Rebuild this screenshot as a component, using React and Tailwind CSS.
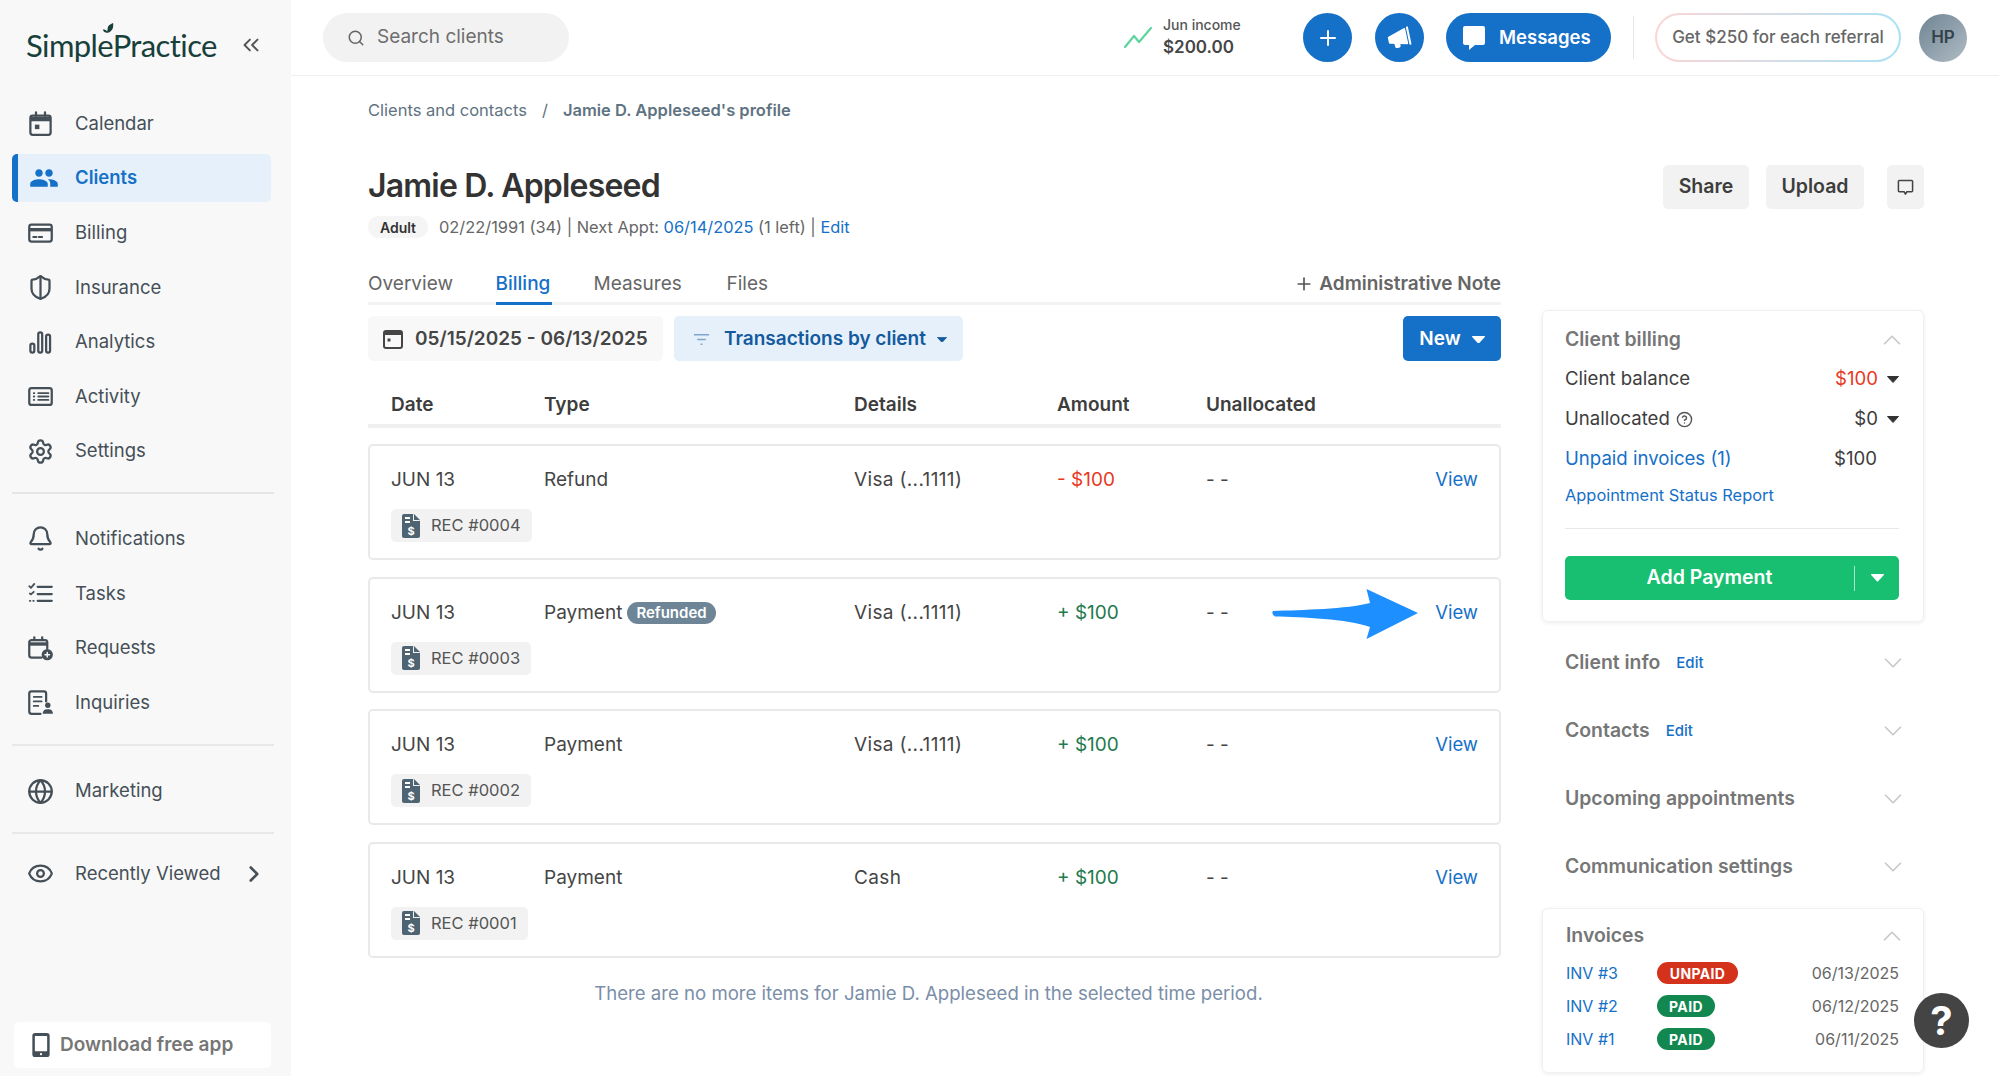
import React from 'react';
import { ChevronsLeft, ChevronRight, ChevronUp, ChevronDown, ShieldHalf, Settings, Bell, Globe, Eye, Search, Plus, CircleHelp } from 'lucide-react';
import { MdPeople } from 'react-icons/md';

const Ico = ({ children }) => (
  <svg viewBox="0 0 24 24" width="27" height="27" fill="none" stroke="#454f57" strokeWidth="2" strokeLinecap="round" strokeLinejoin="round">{children}</svg>
);
const CalendarI = () => <Ico><rect x="3" y="5" width="18" height="17" rx="2" /><path d="M3 8h18" strokeWidth="4" strokeLinecap="butt" /><path d="M8 2v3M16 2v3" /><rect x="7" y="13" width="4" height="4" fill="#454f57" stroke="none" /></Ico>;
const CardI = () => <Ico><rect x="2" y="5" width="20" height="15" rx="2" /><path d="M2 9.5h20" strokeWidth="3" strokeLinecap="butt" /><path d="M5.5 16h3M10.5 16h3" strokeWidth="1.6" /></Ico>;
const BarsI = () => <Ico><rect x="3" y="13" width="3.5" height="8" rx="1.7" /><rect x="10" y="3" width="3.5" height="18" rx="1.7" /><rect x="17" y="5" width="3.5" height="16" rx="1.7" /></Ico>;
const ListI = () => <Ico><rect x="2" y="4.5" width="20" height="15" rx="2" /><path d="M10 9h9M10 12h9M10 15h9M6 9h.5M6 12h.5M6 15h.5" strokeWidth="1.6" /></Ico>;
const TasksI = () => <Ico><path d="M2 5.5l1.5 1.5L6.5 3.5M2.5 12l1 .8L6 10.5M2.5 18.5h.5M5.5 18.5h.5" strokeWidth="1.6" /><path d="M9.5 6h12.5M9.5 12.5h12.5M9.5 18.5h12.5" /></Ico>;
const RequestI = () => <Ico><path d="M13 20H4a2 2 0 0 1-2-2V6.5a2 2 0 0 1 2-2h12a2 2 0 0 1 2 2V12" /><path d="M2 8h16" strokeWidth="3" strokeLinecap="butt" /><path d="M6.5 2v2.5M13.5 2v2.5" /><circle cx="18" cy="17.5" r="5" fill="#454f57" stroke="none" /><path d="M18 15.5v4M16 17.5h4" stroke="#f8f8f8" strokeWidth="1.3" /></Ico>;
const InquiryI = () => <Ico><path d="M12 22H4a2 2 0 0 1-2-2V4a2 2 0 0 1 2-2h11a2 2 0 0 1 2 2v7" /><path d="M6 7h7M6 11h7M6 15h4" strokeWidth="1.6" /><circle cx="18.5" cy="14.5" r="2.4" fill="#454f57" stroke="none" /><path d="M14 22v-1a4 4 0 0 1 4-3h1a4 4 0 0 1 4 3v1z" fill="#454f57" stroke="none" /></Ico>;
const PhoneI = () => <svg viewBox="0 0 18 26" width="18" height="25"><rect x="0" y="0" width="18" height="25" rx="3" fill="#454f57" /><rect x="2.6" y="3" width="12.8" height="16" rx="0.5" fill="#fff" /><circle cx="9" cy="22" r="1.2" fill="#fff" /></svg>;
const ReceiptI = () => (
  <svg viewBox="0 0 18 24" width="18" height="24">
    <path d="M2 0h9l7 7v15a2 2 0 0 1-2 2H2a2 2 0 0 1-2-2V2a2 2 0 0 1 2-2z" fill="#4e6472" />
    <path d="M11 0l7 7h-7z" fill="#f2f2f2" />
    <path d="M12 0l6 6h-6z" fill="#4e6472" />
    <rect x="3" y="3" width="5" height="2" fill="#fff" /><rect x="3" y="7" width="5" height="2" fill="#fff" />
    <text x="9" y="20.5" textAnchor="middle" fontSize="11" fontWeight="700" fill="#fff" fontFamily="Inter, sans-serif">$</text>
  </svg>
);
const Tri = ({ c = '#333', w = 12 }) => <svg viewBox="0 0 12 7" width={w} height={w * 7 / 12}><path d="M0.5 0.5h11L6 6.5z" fill={c} stroke={c} strokeLinejoin="round" /></svg>;

const navA = [
  ['Calendar', <CalendarI />], ['Clients', <MdPeople size={30} color="#1570c8" />], ['Billing', <CardI />], ['Insurance', <ShieldHalf size={27} color="#454f57" strokeWidth={2} />],
  ['Analytics', <BarsI />], ['Activity', <ListI />], ['Settings', <Settings size={27} color="#454f57" strokeWidth={2} />],
];
const navB = [['Notifications', <Bell size={27} color="#454f57" strokeWidth={2} />], ['Tasks', <TasksI />], ['Requests', <RequestI />], ['Inquiries', <InquiryI />]];

const NavItem = ({ label, icon }) => {
  const active = label === 'Clients';
  return (
    <div className={active ? 'h-[48px] my-[3.3px] mr-[3px] flex items-center rounded-[5px] bg-[#e6f0fa] border-l-[6px] border-[#1570c8]' : 'h-[54.6px] flex items-center'}>
      <span className={active ? 'w-[51px] mr-[6px] flex justify-center' : 'w-[57px] mr-[6px] flex justify-center'}>{icon}</span>
      <span className={active ? 'text-[18.5px] font-semibold text-[#1570c8]' : 'text-[18.5px] text-[#454f57]'}>{label}</span>
    </div>
  );
};

const rows = [
  ['Refund', 'Visa (...1111)', '- $100', '#e8391f', 'REC #0004', false],
  ['Payment', 'Visa (...1111)', '+ $100', '#1f7a4d', 'REC #0003', true],
  ['Payment', 'Visa (...1111)', '+ $100', '#1f7a4d', 'REC #0002', false],
  ['Payment', 'Cash', '+ $100', '#1f7a4d', 'REC #0001', false],
];

const TxCard = ({ r, arrow }) => (
  <div className="relative h-[116px] rounded-[5px] border-2 border-[#e9e9e9] pl-[21px] pr-[21px] pt-[20px]">
    <div className="flex items-center h-[29px] text-[19px] text-[#454545]">
      <span className="w-[153px]">JUN 13</span>
      <span className="w-[310px] flex items-center gap-[5px]">{r[0]}{r[5] && <span className="h-[22px] px-[9px] flex items-center rounded-full bg-[#6d8596] text-white text-[15px] font-semibold">Refunded</span>}</span>
      <span className="w-[203px] tracking-[0.35px]">{r[1]}</span>
      <span className="w-[149px]" style={{ color: r[3] }}>{r[2]}</span>
      <span className="flex-1">- -</span>
      <span className="text-[#1570c8] text-[18.5px] -mt-[1px]">View</span>
    </div>
    <div className="mt-[14px] inline-flex items-center h-[33px] rounded-[5px] bg-[#f2f2f2] pl-[11px] pr-[11px] gap-[11px] text-[16.5px] text-[#555]">
      <ReceiptI />{r[4]}
    </div>
    {arrow && (
      <svg className="absolute left-[902px] top-[9px]" viewBox="0 0 147 52" width="147" height="52">
        <path d="M1 23 C30 22 75 21 98 15 L94.5 1 L146 25 L94.5 51 L98 39 C75 31 30 29 3 28.5 Q-1 26 1 23z" fill="#1e8fff" />
      </svg>
    )}
  </div>
);

const Acc = ({ title, edit }) => (
  <div className="h-[68px] pl-[23px] pr-[24px] flex items-center">
    <span className="text-[19.4px] font-semibold text-[#767676]">{title}</span>
    {edit && <span className="ml-[16px] text-[15px] font-medium text-[#1570c8]">Edit</span>}
    <ChevronDown size={30} strokeWidth={1.4} color="#c9c9c9" className="ml-auto -mr-[8px]" />
  </div>
);

const Inv = ({ n, s, d }) => (
  <div className="h-[33px] flex items-center">
    <span className="w-[91px] text-[16px] text-[#1570c8]">{n}</span>
    <span className={s === 'UNPAID' ? 'h-[22px] w-[81px] rounded-full bg-[#d4321b] text-white text-[14px] font-bold flex items-center justify-center tracking-wide' : 'h-[22px] w-[58px] rounded-full bg-[#12874f] text-white text-[14px] font-bold flex items-center justify-center tracking-wide'}>{s}</span>
    <span className="ml-auto text-[16px] text-[#666]">{d}</span>
  </div>
);

export default function App() {
  return (
    <div className="w-[1999px] h-[1076px] overflow-hidden flex bg-white relative" style={{ fontFamily: 'Inter, "Liberation Sans", sans-serif' }}>
      <aside className="w-[291px] shrink-0 h-full bg-[#f8f8f8] flex flex-col pl-[12px] pr-[17px] relative">
        <div className="h-[96.4px] flex items-center justify-between pl-[14px] pr-[10px] pb-[6px]">
          <span className="relative text-[31px] leading-none text-[#17403a] tracking-[-0.6px]" style={{ fontFamily: 'Lato, sans-serif' }}>
            SimplePractice
            <svg className="absolute left-[76px] top-[-7px]" viewBox="0 0 14 14" width="12" height="12"><path d="M1 8c1.5-1 4 0 5 2 1-3 0-5 2-7 1.500-1.400 3-2 5-3 .5 5-.5 9-5 11-3 1-6 0-7-3z" fill="#17403a" /></svg>
          </span>
          <ChevronsLeft size={26} color="#555" strokeWidth={1.8} />
        </div>
        {navA.map(([l, i]) => <NavItem key={l} label={l} icon={i} />)}
        <div className="h-[2px] bg-[#e5e5e5] mt-[13px] mb-[18px]" />
        {navB.map(([l, i]) => <NavItem key={l} label={l} icon={i} />)}
        <div className="h-[2px] bg-[#e8e8e8] mt-[14px] mb-[18px]" />
        <NavItem label="Marketing" icon={<Globe size={27} color="#454f57" strokeWidth={2} />} />
        <div className="h-[2px] bg-[#e8e8e8] mt-[13px] mb-[13px]" />
        <div className="h-[54.6px] flex items-center">
          <span className="w-[57px] mr-[6px] flex justify-center"><Eye size={27} color="#454f57" strokeWidth={2} /></span>
          <span className="text-[18.5px] text-[#454f57]">Recently Viewed</span>
          <ChevronRight size={26} color="#454f57" strokeWidth={2.4} className="ml-auto mr-[7px]" />
        </div>
        <div className="mt-auto mb-[8px] ml-[2px] mr-[3px] h-[46px] bg-white rounded-[5px] flex items-center pl-[18px] gap-[10px] text-[19px] font-semibold text-[#767676]">
          <PhoneI />Download free app
        </div>
      </aside>

      <main className="flex-1 min-w-0 flex flex-col">
        <header className="h-[76px] shrink-0 border-b border-[#efefef] flex items-center pl-[32px] pr-[32px]">
          <div className="w-[246px] h-[49px] rounded-full bg-[#f2f2f2] flex items-center pl-[24px] gap-[12px] text-[19px] text-[#6e6e6e]">
            <Search size={18} color="#666" />Search clients
          </div>
          <svg className="ml-[555px]" viewBox="0 0 28 24" width="28" height="24" fill="none" stroke="#5fd3a0" strokeWidth="2.2" strokeLinejoin="round" strokeLinecap="round"><path d="M1 21 L10 10 L15 16 L27 2" /></svg>
          <div className="ml-[11px] w-[140px] flex flex-col -mt-[2px]">
            <span className="text-[14px] leading-[20px] font-medium text-[#555]">Jun income</span>
            <span className="text-[17px] leading-[24px] font-semibold text-[#454545]">$200.00</span>
          </div>
          <div className="w-[49px] h-[49px] rounded-full bg-[#1570c8] flex items-center justify-center"><Plus size={24} color="#fff" strokeWidth={2} /></div>
          <div className="ml-[23px] w-[49px] h-[49px] rounded-full bg-[#1570c8] flex items-center justify-center">
            <svg viewBox="0 0 24 24" width="25" height="25" style={{ transform: 'rotate(-12deg)' }}>
              <path d="M2 10 L18 5 V19 L2 15z" fill="#fff" stroke="#fff" strokeWidth="2" strokeLinejoin="round" />
              <rect x="20" y="3" width="2" height="18" rx="1" fill="#fff" />
              <path d="M6 16v3.500a2 2 0 0 0 2 2h1.500a2 2 0 0 0 2-2V18z" fill="#fff" />
            </svg>
          </div>
          <div className="ml-[22px] w-[165px] h-[49px] rounded-full bg-[#1570c8] flex items-center pl-[16px] gap-[13px] text-[18.5px] font-semibold text-white">
            <svg viewBox="0 0 24 26" width="24" height="26"><path d="M3 1h18a2 2 0 0 1 2 2v15a2 2 0 0 1-2 2h-8l-6 5v-5H3a2 2 0 0 1-2-2V3a2 2 0 0 1 2-2z" fill="#fff" /></svg>
            Messages
          </div>
          <div className="ml-[22px] w-px h-[43px] bg-[#e8e8e8]" />
          <div className="ml-[21px] w-[246px] h-[49px] rounded-full p-[2px] bg-gradient-to-r from-[#fbd5d5] to-[#a8e2f5]">
            <div className="w-full h-full rounded-full bg-white flex items-center justify-center text-[17px] font-medium text-[#666]">Get $250 for each referral</div>
          </div>
          <div className="ml-[18px] w-[48px] h-[48px] rounded-full bg-gradient-to-br from-[#6f8493] to-[#b0bcc4] flex items-center justify-center text-[17px] font-semibold text-[#33414b]">HP</div>
        </header>

        <div className="flex-1 min-h-0 pl-[77px] pr-[75px] flex flex-col">
          <div className="mt-[24px] h-[20px] flex items-center text-[16.5px] text-[#5f7381] gap-[15px]">
            <span>Clients and contacts</span><span>/</span><span className="font-semibold">Jamie D. Appleseed's profile</span>
          </div>
          <div className="mt-[44px] flex items-start justify-between h-[88px]">
            <div>
              <h1 className="h-[44px] flex items-center text-[32px] font-semibold tracking-[-0.8px] text-[#333]">Jamie D. Appleseed</h1>
              <div className="mt-[7px] flex items-center text-[16.4px] text-[#666]">
                <span className="h-[22px] w-[60px] rounded-full bg-[#f5f5f5] flex items-center justify-center text-[14px] font-semibold text-[#333] mr-[11px]">Adult</span>
                02/22/1991 (34) | Next Appt:&nbsp;<span className="text-[#1570c8]">06/14/2025</span>&nbsp;(1 left) |&nbsp;<span className="text-[#1570c8]">Edit</span>
              </div>
            </div>
            <div className="flex items-center text-[19.5px] font-semibold text-[#3d3d3d] pt-[1px]">
              <div className="w-[86px] h-[44px] rounded-[5px] bg-[#f2f2f2] flex items-center justify-center">Share</div>
              <div className="ml-[17px] w-[98px] h-[44px] rounded-[5px] bg-[#f2f2f2] flex items-center justify-center">Upload</div>
              <div className="ml-[23px] w-[37px] h-[44px] rounded-[5px] bg-[#f2f2f2] flex items-center justify-center">
                <svg viewBox="0 0 18 18" width="17" height="17" fill="none" stroke="#444" strokeWidth="1.6" strokeLinejoin="round"><path d="M2.500 1.500h13a1 1 0 0 1 1 1v10a1 1 0 0 1-1 1h-5l-1.500 2.500-1.500-2.500h-5a1 1 0 0 1-1-1v-10a1 1 0 0 1 1-1z" /></svg>
              </div>
            </div>
          </div>

          <div className="flex justify-between">
            <div className="w-[1133px] mt-[16px]">
              <div className="h-[37px] border-b-[3px] border-[#f3f3f3] flex items-start text-[19px] text-[#666] leading-[31px]">
                <span className="w-[127.500px]">Overview</span>
                <span className="w-[98px] h-[37px] relative text-[#1570c8] font-medium">Billing<span className="absolute left-0 bottom-0 w-[56px] h-[3px] bg-[#1570c8]" /></span>
                <span className="w-[133px]">Measures</span>
                <span>Files</span>
                <span className="ml-auto flex items-center gap-[5px] font-semibold"><Plus size={20} color="#555" />Administrative Note</span>
              </div>
              <div className="mt-[11px] h-[45px] flex items-center">
                <div className="w-[295px] h-[45px] rounded-[5px] bg-[#f8f8f8] flex items-center pl-[15px] pt-[2px] gap-[12px] text-[19px] font-semibold text-[#454545]">
                  <svg viewBox="0 0 20 20" width="20" height="20" className="-mt-[2px]"><rect x="1" y="2" width="18" height="17" rx="2" fill="none" stroke="#454545" strokeWidth="2" /><rect x="1" y="2" width="18" height="4" fill="#454545" /><rect x="4.500" y="9.500" width="3" height="3" fill="#454545" /></svg>
                  05/15/2025 - 06/13/2025
                </div>
                <div className="ml-[11px] w-[289px] h-[45px] rounded-[5px] bg-[#e6f0fa] flex items-center pl-[19px] pt-[2px] text-[19px] font-semibold text-[#135a9e]">
                  <svg viewBox="0 0 18 14" width="17" height="14" fill="none" stroke="#7ea6cc" strokeWidth="1.6"><path d="M1 1.500h16M4.500 6.500h9M8 11.500h2" /></svg>
                  <span className="ml-[14px]">Transactions by client</span>
                  <span className="ml-[11px]"><Tri c="#135a9e" w={10} /></span>
                </div>
                <div className="ml-auto w-[98px] h-[45px] rounded-[5px] bg-[#1570c8] flex items-center justify-center pt-[2px] gap-[11px] text-[19px] font-semibold text-white">New<Tri c="#fff" w={13} /></div>
              </div>
              <div className="mt-[24px] h-[43px] border-b-4 border-[#f0f0f0] flex pl-[23px] text-[19px] font-semibold text-[#3d3d3d] leading-[40px]">
                <span className="w-[153px]">Date</span><span className="w-[310px]">Type</span><span className="w-[203px]">Details</span><span className="w-[149px]">Amount</span><span>Unallocated</span>
              </div>
              <div className="mt-[16px] flex flex-col gap-[16.6px]">
                {rows.map((r, i) => <TxCard key={r[4]} r={r} arrow={i === 1} />)}
              </div>
              <p className="mt-[22px] text-center text-[18.6px] text-[#7b8ea8] pr-[12px]">There are no more items for Jamie D. Appleseed in the selected time period.</p>
            </div>

            <div className="w-[382px] mt-[58px]">
              <div className="h-[312px] rounded-[6px] border border-[#f0f0f0] shadow-[0_1px_4px_rgba(0,0,0,0.08)] pl-[22px] pr-[24px] pt-[10px]">
                <div className="h-[38px] flex items-center justify-between"><span className="text-[19.4px] font-semibold text-[#767676]">Client billing</span><ChevronUp size={30} strokeWidth={1.4} color="#c9c9c9" className="-mr-[8px]" /></div>
                <div className="h-[40px] flex items-center text-[18.6px] text-[#3d3d3d]">Client balance<span className="ml-auto text-[#e8391f]">$100</span><span className="ml-[9px]"><Tri /></span></div>
                <div className="h-[40px] flex items-center text-[18.6px] text-[#3d3d3d]">Unallocated<CircleHelp size={17} color="#555" className="ml-[6px]" /><span className="ml-auto">$0</span><span className="ml-[9px]"><Tri /></span></div>
                <div className="h-[40px] flex items-center text-[18.6px] text-[#1570c8]">Unpaid invoices (1)<span className="ml-auto mr-[22px] text-[#3d3d3d]">$100</span></div>
                <div className="h-[32px] flex items-center text-[16.4px] text-[#1570c8]">Appointment Status Report</div>
                <div className="mt-[17px] h-px bg-[#e8e8e8]" />
                <div className="mt-[27px] h-[44px] rounded-[5px] bg-[#18bf71] flex items-center text-[19.5px] font-semibold text-white">
                  <span className="flex-1 text-center">Add Payment</span>
                  <span className="w-px h-[25px] bg-[#a8e6c9]" />
                  <span className="w-[44px] flex justify-center"><Tri c="#fff" w={13} /></span>
                </div>
              </div>
              <div className="mt-[7px]">
                <Acc title="Client info" edit />
                <Acc title="Contacts" edit />
                <Acc title="Upcoming appointments" />
                <Acc title="Communication settings" />
              </div>
              <div className="mt-[7px] rounded-[6px] border border-[#f0f0f0] shadow-[0_1px_4px_rgba(0,0,0,0.08)] pl-[23px] pr-[24px] pt-[9px] pb-[16px]">
                <div className="h-[35px] flex items-center justify-between"><span className="text-[19.4px] font-semibold text-[#767676]">Invoices</span><ChevronUp size={30} strokeWidth={1.4} color="#c9c9c9" className="-mr-[8px]" /></div>
                <div className="mt-[3.5px]"><Inv n="INV #3" s="UNPAID" d="06/13/2025" /><Inv n="INV #2" s="PAID" d="06/12/2025" /><Inv n="INV #1" s="PAID" d="06/11/2025" /></div>
              </div>
            </div>
          </div>
        </div>
      </main>

      <div className="absolute left-[1914px] top-[993px] w-[55px] h-[55px] rounded-full bg-[#444] flex items-center justify-center text-white text-[40px] font-bold">?</div>
    </div>
  );
}
